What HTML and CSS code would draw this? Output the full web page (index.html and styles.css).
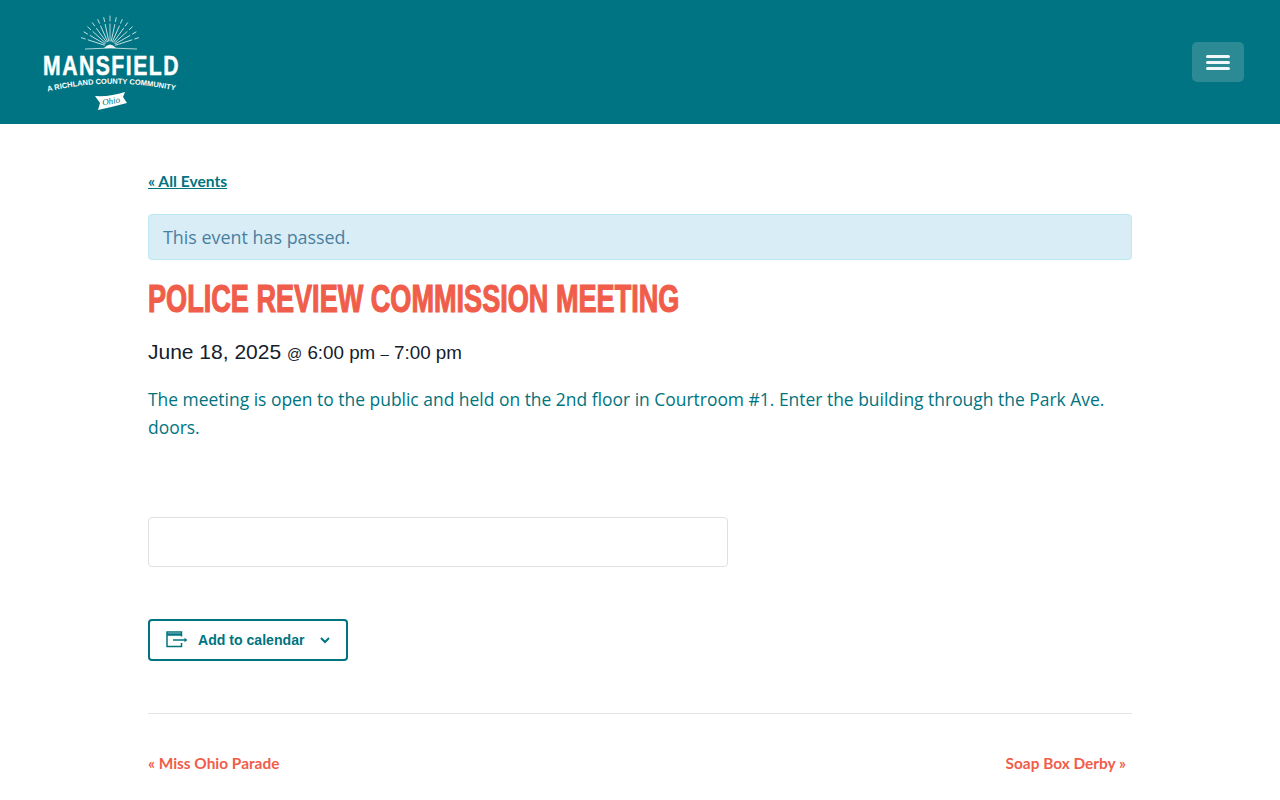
FILE: index.html
```html
<!DOCTYPE html>
<html lang="en">
<head>
    <meta charset="UTF-8">
    <meta name="viewport" content="width=device-width, initial-scale=1.0">
    <title>Police Review Commission Meeting</title>
    <link rel="stylesheet" href="styles.css">
</head>
<body>

    <header class="site-header">
        <a class="logo" href="#">
            <svg class="logo-art" width="136" height="92" viewBox="0 0 136 92">
                <g stroke="#dcecee" stroke-width="0.8" stroke-linecap="round" fill="none" stroke-dasharray="17 3 5">
                    <path d="M66 26 V1"/>
                    <path d="M66 26 V2" transform="rotate(12 66 32)"/>
                    <path d="M66 26 V2" transform="rotate(-12 66 32)"/>
                    <path d="M66 26 V2" transform="rotate(24 66 32)"/>
                    <path d="M66 26 V2" transform="rotate(-24 66 32)"/>
                    <path d="M66 26 V2" transform="rotate(36 66 32)"/>
                    <path d="M66 26 V2" transform="rotate(-36 66 32)"/>
                    <path d="M66 26 V2" transform="rotate(48 66 32)"/>
                    <path d="M66 26 V2" transform="rotate(-48 66 32)"/>
                    <path d="M66 26 V2" transform="rotate(60 66 32)"/>
                    <path d="M66 26 V2" transform="rotate(-60 66 32)"/>
                    <path d="M66 26 V2" transform="rotate(72 66 32)"/>
                    <path d="M66 26 V2" transform="rotate(-72 66 32)"/>
                </g>
                <path d="M41 34 Q66 32 93 34" stroke="#dcecee" stroke-width="0.8" fill="none"/>
                <path d="M60 33 Q66 26 72 33 Z" fill="#e6f2f3"/>
                <text class="logo-name" x="67.5" y="60" text-anchor="middle" textLength="137" lengthAdjust="spacingAndGlyphs">MANSFIELD</text>
                <path id="logo-curve" d="M2 77 Q66 61 133 76" fill="none"/>
                <text class="logo-tag"><textPath href="#logo-curve" startOffset="50%" text-anchor="middle">A RICHLAND COUNTY COMMUNITY</textPath></text>
                <path d="M51 81 Q66 82 81 77 L79 82 L83 88 Q68 92 54 95 L56 88 Z" fill="#ffffff"/>
                <text class="logo-ohio" x="67" y="89" text-anchor="middle" transform="rotate(-10 67 86)">Ohio</text>
            </svg>
        </a>
        <button class="menu-btn" type="button" aria-label="Menu">
            <span></span>
            <span></span>
            <span></span>
        </button>
    </header>

    <main class="event">
        <p class="back-link"><a href="#">« All Events</a></p>

        <div class="notice">This event has passed.</div>

        <h1 class="event-title"><span>Police Review Commission Meeting</span></h1>

        <h2 class="event-when">June 18, 2025 <span class="when-small"><small>@</small> 6:00 pm <small>–</small> 7:00 pm</span></h2>

        <p class="event-text">The meeting is open to the public and held on the 2nd floor in Courtroom #1. Enter the building through the Park Ave. doors.</p>

        <div class="empty-box"></div>

        <button class="cal-btn" type="button">
            <svg width="22" height="18" viewBox="0 0 22 18" fill="none" stroke="#00747f" stroke-width="1.5">
                <path d="M15.5 5.5 V1 H1 V15.5 H15.5 V12"/>
                <path d="M1 3.5 H15.5" stroke-width="2.5"/>
                <path d="M7 9 H19"/>
                <path d="M18.5 6.8 L21.4 9 L18.5 11.2 Z" fill="#00747f" stroke="none"/>
            </svg>
            <span>Add to calendar</span>
            <svg class="cal-arrow" width="10" height="7" viewBox="0 0 10 7" fill="none" stroke="#00747f" stroke-width="2">
                <path d="M1 1 L5 5 L9 1"/>
            </svg>
        </button>

        <nav class="event-nav">
            <a href="#">« Miss Ohio Parade</a>
            <a href="#">Soap Box Derby »</a>
        </nav>
    </main>

</body>
</html>
```

FILE: styles.css
```css
body {
    font-family: "Open Sans", "Liberation Sans", sans-serif;
    background-color: #ffffff;
    margin: 0;
    color: #00747f;
    overflow: hidden;
}
a {
    color: inherit;
}
.site-header {
    background-color: #007482;
    height: 124px;
    display: flex;
    justify-content: space-between;
    align-items: center;
    padding: 0 36px 0 44px;
    box-sizing: border-box;
}
.logo {
    display: block;
    height: 92px;
    margin-top: -2px;
}
.logo-art {
    overflow: visible;
}
.logo-name {
    font-family: "Liberation Sans", sans-serif;
    font-weight: 700;
    font-size: 28px;
    letter-spacing: 2px;
    fill: #ffffff;
    stroke: #ffffff;
    stroke-width: 0.5px;
}
.logo-tag {
    font-family: "Liberation Sans", sans-serif;
    font-weight: 700;
    font-size: 7.5px;
    fill: #ffffff;
}
.logo-ohio {
    font-family: "Liberation Serif", serif;
    font-style: italic;
    font-size: 9px;
    fill: #00747f;
}
.menu-btn {
    width: 52px;
    height: 40px;
    background-color: #2b8a94;
    border: none;
    border-radius: 5px;
    display: flex;
    flex-direction: column;
    justify-content: center;
    align-items: center;
    gap: 3px;
    padding: 0;
}
.menu-btn span {
    display: block;
    width: 24px;
    height: 3px;
    border-radius: 2px;
    background-color: #f2f8f9;
}
.event {
    width: 984px;
    margin: 0 auto;
}
.back-link {
    margin: 0;
    padding-top: 48px;
    font-family: "Lato", sans-serif;
    font-size: 15.6px;
    line-height: 18px;
    font-weight: 700;
}
.notice {
    margin-top: 24px;
    height: 46px;
    box-sizing: border-box;
    padding: 0 14px;
    line-height: 44px;
    font-size: 17.9px;
    color: #4a7f9f;
    background-color: #d9edf7;
    border: 1px solid #bce8f1;
    border-radius: 4px;
}
.event-title {
    margin: 19px 0 0;
    font-family: "Liberation Sans", sans-serif;
    font-size: 38px;
    line-height: 40px;
    font-weight: 700;
    text-transform: uppercase;
    color: #f05d4a;
    -webkit-text-stroke: 1.2px #f05d4a;
    white-space: nowrap;
}
.event-title span {
    display: inline-block;
    transform: scaleX(0.713);
    transform-origin: left center;
}
.event-when {
    margin: 18px 0 0;
    font-family: "Liberation Sans", Arial, sans-serif;
    font-size: 21px;
    line-height: 29px;
    font-weight: 400;
    color: #14202b;
}
.when-small {
    font-size: 18.8px;
}
.when-small small {
    font-size: 15px;
}
.event-text {
    margin: 17px 0 0;
    font-size: 17.45px;
    line-height: 28px;
}
.empty-box {
    margin-top: 76px;
    width: 580px;
    height: 50px;
    box-sizing: border-box;
    background-color: #ffffff;
    border: 1px solid #e0e0e0;
    border-radius: 4px;
}
.cal-btn {
    margin-top: 52px;
    width: 200px;
    height: 42px;
    display: flex;
    align-items: center;
    padding: 0 16px;
    background-color: #ffffff;
    border: 2px solid #00747f;
    border-radius: 4px;
    color: #00747f;
    font-family: "Liberation Sans", Arial, sans-serif;
    font-size: 14.1px;
    font-weight: 700;
}
.cal-btn span {
    margin-left: 10px;
}
.cal-arrow {
    margin-left: 15px;
}
.event-nav {
    margin-top: 52px;
    border-top: 1px solid #e4e4e4;
    padding: 39px 6px 0 0;
    display: flex;
    justify-content: space-between;
    font-family: "Lato", sans-serif;
    font-size: 15.4px;
    line-height: 20px;
    font-weight: 700;
    color: #f05d4a;
}
.event-nav a {
    text-decoration: none;
}
```
